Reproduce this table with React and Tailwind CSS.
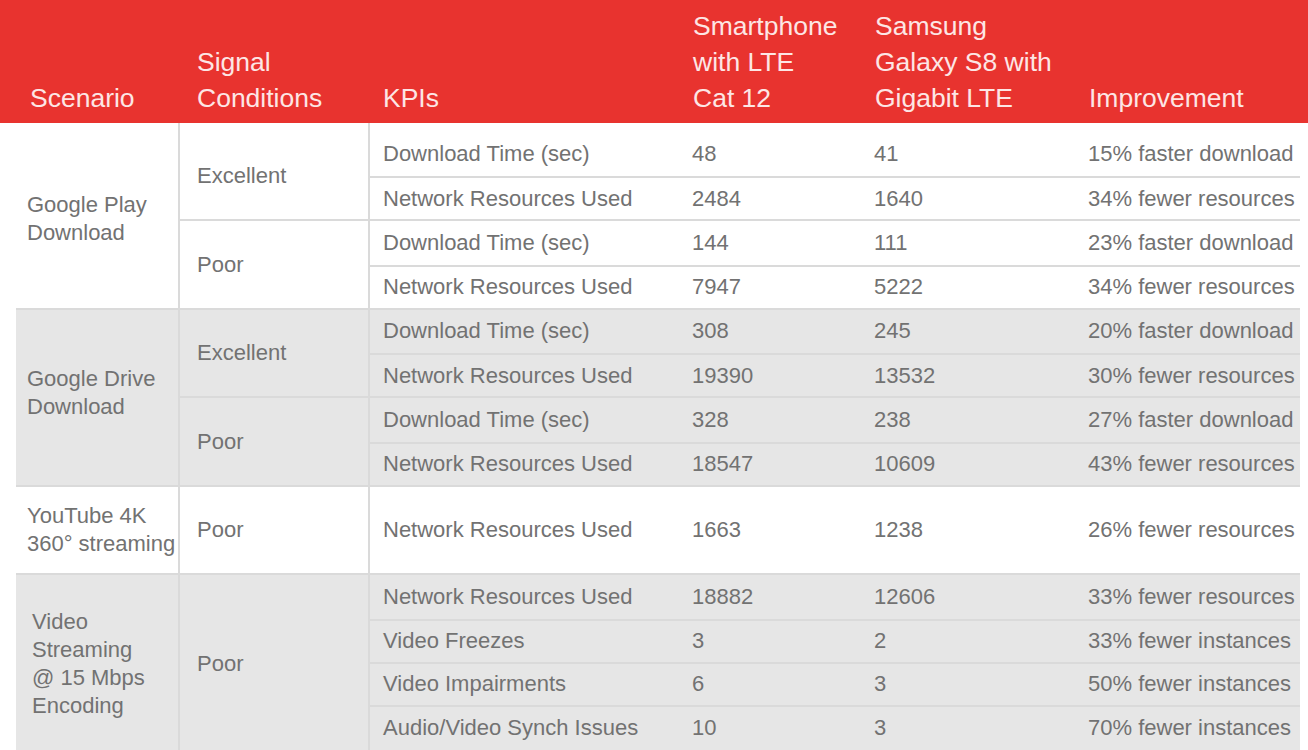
import React from 'react';

const groups = [
  {
    name: ['Google Play', 'Download'],
    shaded: false,
    pad: 'pl-[11px] pt-[8px]',
    signals: [
      {
        label: 'Excellent',
        rows: [
          ['Download Time (sec)', '48', '41', '15% faster download'],
          ['Network Resources Used', '2484', '1640', '34% fewer resources'],
        ],
      },
      {
        label: 'Poor',
        rows: [
          ['Download Time (sec)', '144', '111', '23% faster download'],
          ['Network Resources Used', '7947', '5222', '34% fewer resources'],
        ],
      },
    ],
  },
  {
    name: ['Google Drive', 'Download'],
    shaded: true,
    pad: 'pl-[11px] pb-[8px]',
    signals: [
      {
        label: 'Excellent',
        rows: [
          ['Download Time (sec)', '308', '245', '20% faster download'],
          ['Network Resources Used', '19390', '13532', '30% fewer resources'],
        ],
      },
      {
        label: 'Poor',
        rows: [
          ['Download Time (sec)', '328', '238', '27% faster download'],
          ['Network Resources Used', '18547', '10609', '43% fewer resources'],
        ],
      },
    ],
  },
  {
    name: ['YouTube 4K', '360° streaming'],
    shaded: false,
    pad: 'pl-[11px]',
    tall: true,
    signals: [
      {
        label: 'Poor',
        rows: [['Network Resources Used', '1663', '1238', '26% fewer resources']],
      },
    ],
  },
  {
    name: ['Video', 'Streaming', '@ 15 Mbps', 'Encoding'],
    shaded: true,
    pad: 'pl-[16px]',
    signals: [
      {
        label: 'Poor',
        rows: [
          ['Network Resources Used', '18882', '12606', '33% fewer resources'],
          ['Video Freezes', '3', '2', '33% fewer instances'],
          ['Video Impairments', '6', '3', '50% fewer instances'],
          ['Audio/Video Synch Issues', '10', '3', '70% fewer instances'],
        ],
      },
    ],
  },
];

const HeadCell = ({ lines, className }) => (
  <div className={`flex flex-col justify-end ${className}`}>
    {lines.map((l, i) => (
      <span key={i} className="leading-[36px] whitespace-nowrap">
        {l}
      </span>
    ))}
  </div>
);

const KpiRow = ({ row, first, height }) => (
  <div
    className={`grid grid-cols-[309px_182px_214px_1fr] items-center ${height} ${
      first ? '' : 'border-t-2 border-[#dadada]'
    }`}
  >
    <div className="pl-[13px] whitespace-nowrap">{row[0]}</div>
    <div className="pl-[13px]">{row[1]}</div>
    <div className="pl-[13px]">{row[2]}</div>
    <div className="pl-[13px] whitespace-nowrap">{row[3]}</div>
  </div>
);

export default function App() {
  return (
    <div className="w-[1308px] h-[750px] overflow-hidden bg-white font-['Liberation_Sans',Arial,sans-serif]">
      {/* header */}
      <div className="flex h-[123px] bg-[#e8332f] text-[26.5px] text-[#fde6e5] pb-[7px] items-end">
        <HeadCell lines={['Scenario']} className="w-[180px] pl-[30px]" />
        <HeadCell lines={['Signal', 'Conditions']} className="w-[190px] pl-[17px]" />
        <HeadCell lines={['KPIs']} className="w-[309px] pl-[13px]" />
        <HeadCell lines={['Smartphone', 'with LTE', 'Cat 12']} className="w-[182px] pl-[14px]" />
        <HeadCell lines={['Samsung', 'Galaxy S8 with', 'Gigabit LTE']} className="w-[214px] pl-[14px]" />
        <HeadCell lines={['Improvement']} className="flex-1 pl-[14px]" />
      </div>

      {/* body */}
      <div className="ml-4 w-[1284px] text-[22px] leading-[28px] text-[#727272]">
        {groups.map((g, gi) => (
          <div
            key={gi}
            className={`flex ${g.shaded ? 'bg-[#e6e6e6]' : 'bg-white'} ${
              gi === 0 ? '' : 'border-t-2 border-[#dadada]'
            }`}
          >
            <div className={`w-[164px] shrink-0 border-r-2 border-[#dadada] flex flex-col justify-center ${g.pad}`}>
              {g.name.map((n, i) => (
                <span key={i} className="whitespace-nowrap">
                  {n}
                </span>
              ))}
            </div>
            <div className="flex-1 flex flex-col">
              {g.signals.map((s, si) => (
                <div key={si} className={`flex ${si === 0 ? '' : 'border-t-2 border-[#dadada]'}`}>
                  <div
                    className={`w-[190px] shrink-0 border-r-2 border-[#dadada] flex items-center pl-[17px] ${
                      gi === 0 && si === 0 ? 'pt-[9px]' : ''
                    }`}
                  >
                    {s.label}
                  </div>
                  <div className="flex-1 flex flex-col">
                    {s.rows.map((r, ri) => {
                      let h = 'h-[43.25px]';
                      if (g.tall) h = 'h-[86.5px]';
                      else if (gi === 0 && si === 0 && ri === 0) h = 'h-[53px] pt-[9px]';
                      else if (gi === 3 && ri === 3) h = 'h-[48px] pb-[5px]';
                      return <KpiRow key={ri} row={r} first={ri === 0} height={h} />;
                    })}
                  </div>
                </div>
              ))}
            </div>
          </div>
        ))}
      </div>
    </div>
  );
}
